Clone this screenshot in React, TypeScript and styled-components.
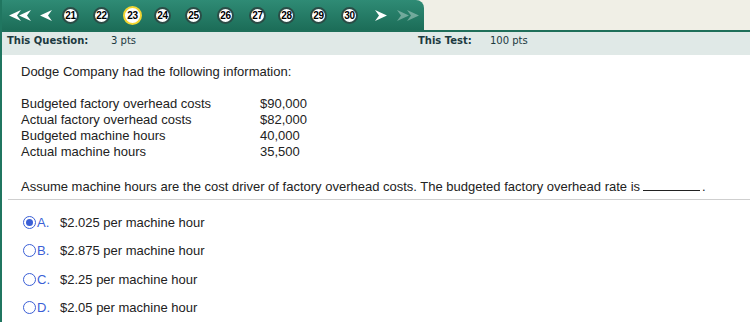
import React from "react";
import styled, { createGlobalStyle } from "styled-components";

const Global = createGlobalStyle`
  html, body { margin: 0; padding: 0; background: #ffffff; }
  body { font-family: "Liberation Sans", Arial, sans-serif; }
`;

const Page = styled.div`
  width: 750px;
  height: 322px;
  overflow: hidden;
  box-sizing: border-box;
  border-left: 2px solid #207660;
`;

const TopRow = styled.div`
  display: flex;
  height: 30px;
  background: #f0efe6;
  border-bottom: 2px solid #1f6f5a;
  margin-left: -2px;
`;

const Tab = styled.div`
  width: 424px;
  height: 30px;
  display: flex;
  align-items: center;
  background: linear-gradient(#2f8b75, #1c6d58);
  border-top-right-radius: 8px;
  padding: 1px 0 0 9px;
  box-sizing: border-box;
`;

const NavIcon = styled.span<{ $ml: number; $faded?: boolean }>`
  display: inline-flex;
  margin-left: ${(p) => p.$ml}px;
  opacity: ${(p) => (p.$faded ? 0.35 : 1)};
`;

const Num = styled.span<{ $current?: boolean; $ml: number }>`
  display: inline-flex;
  align-items: center;
  justify-content: center;
  box-sizing: border-box;
  width: ${(p) => (p.$current ? 19 : 17)}px;
  height: ${(p) => (p.$current ? 19 : 17)}px;
  margin-left: ${(p) => p.$ml}px;
  border-radius: 50%;
  background: #ffffff;
  border: 2px solid ${(p) => (p.$current ? "#f3d531" : "#2b4d47")};
  color: #000;
  font-family: "Liberation Sans", Arial, sans-serif;
  font-weight: bold;
  font-size: 10px;
  letter-spacing: -0.3px;
`;

const InfoBar = styled.div`
  display: grid;
  grid-template-columns: 104px 307px 72px 1fr;
  align-items: start;
  height: 20px;
  padding: 3px 0 0 5px;
  line-height: 12px;
  background: #e0e9e7;
  font-family: "DejaVu Sans", Verdana, sans-serif;
  font-size: 10px;
  color: #1c3a3f;
`;

const Label = styled.span`
  font-weight: bold;
`;

const Content = styled.div`
  padding: 9px 0 0 19px;
  font-size: 13px;
  color: #222;
  line-height: 16px;
`;

const Para = styled.div<{ $mb: number }>`
  margin-bottom: ${(p) => p.$mb}px;
`;

const DataTable = styled.div`
  display: grid;
  grid-template-columns: 239px auto;
  justify-content: start;
  margin-bottom: 18px;
`;

const Blank = styled.span`
  display: inline-block;
  width: 57px;
  border-bottom: 1px solid #222;
  height: 12px;
  margin: 0 2px 0 3px;
`;

const Rule = styled.div`
  height: 1px;
  background: #cfcfcf;
  margin: 4px 0 0 6px;
`;

const Options = styled.div`
  display: flex;
  flex-direction: column;
  padding: 14px 0 0 21px;
  gap: 12.67px;
`;

const Option = styled.div`
  display: flex;
  align-items: center;
  height: 16px;
  font-size: 13px;
  color: #222;
`;

const Radio = styled.span<{ $checked?: boolean }>`
  width: 13px;
  height: 13px;
  box-sizing: border-box;
  border-radius: 50%;
  border: 1.5px solid #3b5fd6;
  display: inline-flex;
  align-items: center;
  justify-content: center;
  &::after {
    content: "";
    width: 7px;
    height: 7px;
    border-radius: 50%;
    background: ${(p) => (p.$checked ? "#3b5fd6" : "transparent")};
  }
`;

const Letter = styled.span`
  color: #3b5fd6;
  width: 23px;
  padding-left: 1px;
`;

const Arrow = ({ dir, double }: { dir: "l" | "r"; double?: boolean }) => {
  const single = "M12 0 L0 5.5 L12 11 L8 5.5 Z";
  const w = double ? 22 : 12;
  return (
    <svg width={w} height={11} viewBox={`0 0 ${w} 11`} style={{ transform: dir === "r" ? "scaleX(-1)" : undefined }}>
      <path d={single} fill="#fff" />
      {double && <path d={single} fill="#fff" transform="translate(10 0)" />}
    </svg>
  );
};

const nums = [
  { n: 21, ml: 10 },
  { n: 22, ml: 14 },
  { n: 23, ml: 13, cur: true },
  { n: 24, ml: 12 },
  { n: 25, ml: 14 },
  { n: 26, ml: 15 },
  { n: 27, ml: 15 },
  { n: 28, ml: 12 },
  { n: 29, ml: 15 },
  { n: 30, ml: 14 },
];

const rows: [string, string][] = [
  ["Budgeted factory overhead costs", "$90,000"],
  ["Actual factory overhead costs", "$82,000"],
  ["Budgeted machine hours", "40,000"],
  ["Actual machine hours", "35,500"],
];

const answers = [
  ["A.", "$2.025 per machine hour", true],
  ["B.", "$2.875 per machine hour", false],
  ["C.", "$2.25 per machine hour", false],
  ["D.", "$2.05 per machine hour", false],
] as const;

export default function App() {
  return (
    <>
      <Global />
      <Page>
        <TopRow>
          <Tab>
            <NavIcon $ml={0}><Arrow dir="l" double /></NavIcon>
            <NavIcon $ml={9}><Arrow dir="l" /></NavIcon>
            {nums.map((x) => (
              <Num key={x.n} $ml={x.ml} $current={x.cur}>{x.n}</Num>
            ))}
            <NavIcon $ml={17}><Arrow dir="r" /></NavIcon>
            <NavIcon $ml={10} $faded><Arrow dir="r" double /></NavIcon>
          </Tab>
        </TopRow>
        <InfoBar>
          <Label>This Question:</Label>
          <span>3 pts</span>
          <Label>This Test:</Label>
          <span>100 pts</span>
        </InfoBar>
        <Content>
          <Para $mb={16}>Dodge Company had the following information:</Para>
          <DataTable>
            {rows.map(([a, b]) => (
              <React.Fragment key={a}>
                <span>{a}</span>
                <span>{b}</span>
              </React.Fragment>
            ))}
          </DataTable>
          <Para $mb={0}>
            Assume machine hours are the cost driver of factory overhead costs. The budgeted factory overhead rate is
            <Blank />.
          </Para>
        </Content>
        <Rule />
        <Options>
          {answers.map(([l, t, c]) => (
            <Option key={l}>
              <Radio $checked={c} />
              <Letter>{l}</Letter>
              <span>{t}</span>
            </Option>
          ))}
        </Options>
      </Page>
    </>
  );
}
